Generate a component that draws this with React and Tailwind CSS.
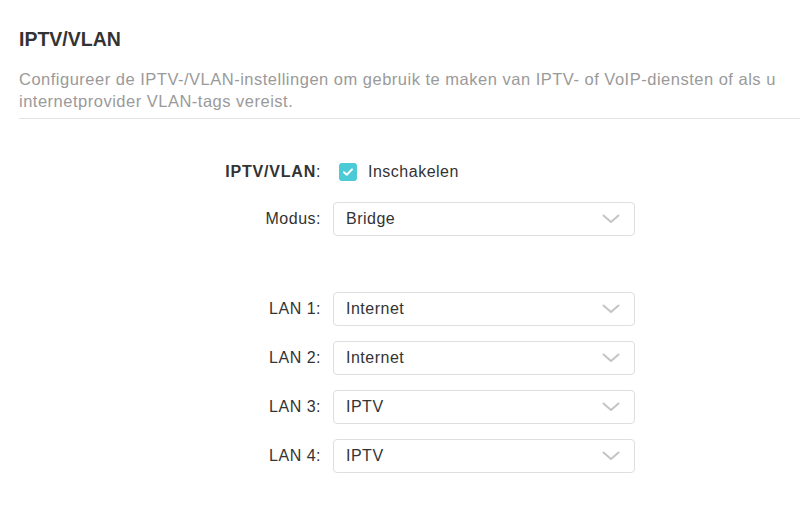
import React from 'react';

/* ---------- chevron for the selects ---------- */
const Chevron = () => (
  <svg width="18" height="10" viewBox="0 0 18 10" fill="none">
    <path d="M1.5 1.5 L9 8 L16.5 1.5" stroke="#c4c4c4" strokeWidth="2" strokeLinecap="round" strokeLinejoin="round" />
  </svg>
);

const SelectBox = ({ value }) => (
  <div className="flex h-[34px] w-[302px] items-center justify-between rounded-[4px] border border-[#dedede] bg-white pl-[12px] pr-[14px]">
    <span className="text-[16px] tracking-[0.5px] text-[#333]">{value}</span>
    <Chevron />
  </div>
);

const Row = ({ label, bold, children, className = '' }) => (
  <div className={`flex items-center ${className}`}>
    <div className="w-[321px] text-right text-[16px] tracking-[0.5px] text-[#333]">
      {bold ? <span className="font-bold tracking-[0.8px]">{label}</span> : label}:
    </div>
    <div className="ml-[12px] flex items-center">{children}</div>
  </div>
);

const lans = [
  { label: 'LAN 1', value: 'Internet' },
  { label: 'LAN 2', value: 'Internet' },
  { label: 'LAN 3', value: 'IPTV' },
  { label: 'LAN 4', value: 'IPTV' },
];

export default function App() {
  return (
    <div className="h-[510px] w-[800px] bg-white font-['Liberation_Sans',Arial,sans-serif]">
      {/* Header */}
      <div className="pl-[19px] pt-[27px]">
        <h1 className="text-[19.5px] font-bold leading-[24px] text-[#333]">IPTV/VLAN</h1>
        <p className="mt-[17px] pr-[10px] text-[16.5px] leading-[22px] tracking-[0.5px] text-[#9a9a9a]">
          Configureer de IPTV-/VLAN-instellingen om gebruik te maken van IPTV- of VoIP-diensten of als u internetprovider VLAN-tags vereist.
        </p>
        <div className="mt-[6px] h-px bg-[#e2e2e2]" />
      </div>

      {/* Form */}
      <div className="pt-[36px]">
        <Row label="IPTV/VLAN" bold className="h-[34px]">
          <div className="ml-[6px] flex h-[18px] w-[18px] items-center justify-center rounded-[3px] bg-[#4acbd6]">
            <svg width="12" height="10" viewBox="0 0 12 10" fill="none">
              <path d="M2 5.2 L4.8 7.8 L10 2.4" stroke="white" strokeWidth="2" strokeLinecap="round" strokeLinejoin="round" />
            </svg>
          </div>
          <span className="ml-[11px] text-[16px] tracking-[0.5px] text-[#333]">Inschakelen</span>
        </Row>

        <Row label="Modus" className="mt-[13px]">
          <SelectBox value="Bridge" />
        </Row>

        <div className="mt-[56px] flex flex-col gap-[15px]">
          {lans.map((l) => (
            <Row key={l.label} label={l.label}>
              <SelectBox value={l.value} />
            </Row>
          ))}
        </div>
      </div>
    </div>
  );
}
